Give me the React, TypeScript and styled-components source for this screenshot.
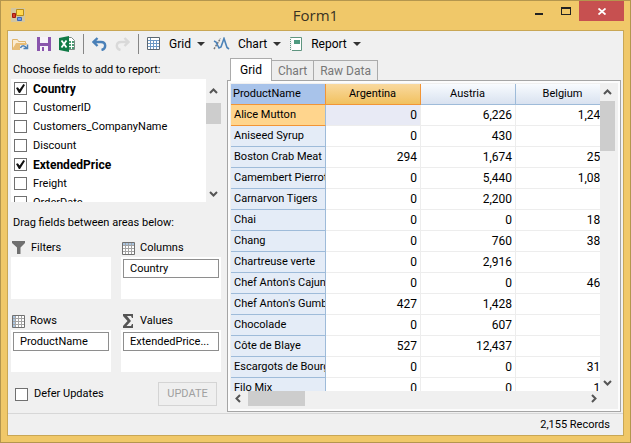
import React from 'react';
import styled, { createGlobalStyle, css } from 'styled-components';

const Global = createGlobalStyle`
  *, *::before, *::after { box-sizing: border-box; }
  html, body { margin: 0; padding: 0; }
  body, button, input, table {
    font-family: Roboto, "Liberation Sans", sans-serif;
    font-size: 12px;
    line-height: 16px;
    color: #000;
  }
  svg { display: block; flex: none; }
`;

const Window = styled.main`
  display: flex;
  flex-direction: column;
  height: 100vh;
  padding: 0 6px 6px;
  border: 1px solid #b4964e;
  background: #f0c869;
`;

const TitleBar = styled.header`
  display: grid;
  grid-template-columns: 1fr auto 1fr;
  height: 29px;
  flex: none;
`;

const TitleIcon = styled.div`
  padding: 7px 4px;
`;

const Title = styled.h1`
  margin: 0;
  font: 400 15px/29px "Open Sans", sans-serif;
  color: #3a3223;
`;

const WindowButtons = styled.div`
  display: flex;
  justify-content: flex-end;
  align-items: flex-start;
`;

const WindowButton = styled.button<{ $close?: boolean }>`
  display: grid;
  place-items: center;
  width: ${p => (p.$close ? 45 : 27)}px;
  height: 20px;
  padding: 0;
  border: 0;
  background: ${p => (p.$close ? '#c75050' : 'transparent')};
`;

const Client = styled.div`
  display: flex;
  flex-direction: column;
  flex: 1;
  min-height: 0;
  border: 1px solid #c9a755;
  background: #f0f0f0;
`;

const Toolbar = styled.nav`
  display: flex;
  align-items: center;
  gap: 8px;
  height: 25px;
  padding-left: 4px;
  flex: none;
`;

const ToolButton = styled.button`
  display: flex;
  align-items: center;
  padding: 0;
  border: 0;
  background: transparent;
`;

const MenuText = styled.span`
  margin: 0 6px 0 8px;
`;

const Separator = styled.span`
  width: 1px;
  height: 20px;
  background: #868686;
`;

const Body = styled.div`
  display: flex;
  gap: 6px;
  flex: 1;
  min-height: 0;
  padding: 0 2px 1px 3px;
`;

const FieldPane = styled.section`
  display: flex;
  flex-direction: column;
  width: 210px;
  flex: none;
  font-size: 11px;
`;

const PaneLabel = styled.h2<{ $spaced?: boolean }>`
  margin: 0;
  padding: ${p => (p.$spaced ? 13 : 6)}px 2px 1px;
  font-size: 11px;
  font-weight: 400;
`;

const FieldBox = styled.div`
  display: flex;
  height: 123px;
  flex: none;
`;

const FieldList = styled.div`
  flex: 1;
  overflow: hidden;
  background: #fff;
`;

const FieldRow = styled.label<{ $bold?: boolean }>`
  display: flex;
  align-items: center;
  gap: 6px;
  height: 19px;
  padding-left: 3px;
  font-size: ${p => (p.$bold ? 12 : 11)}px;
  font-weight: ${p => (p.$bold ? 700 : 400)};
`;

const CheckBox = styled.input.attrs({ type: 'checkbox' })`
  appearance: none;
  display: grid;
  place-items: center;
  width: 13px;
  height: 13px;
  margin: 0;
  flex: none;
  border: 1px solid #707070;
  background: #fff;
  &:checked::before {
    content: '';
    width: 9px;
    height: 9px;
    background: #111;
    clip-path: polygon(0 45%, 20% 35%, 40% 60%, 82% 0, 100% 12%, 45% 100%, 32% 100%);
  }
`;

const Bar = styled.div<{ $horizontal?: boolean }>`
  display: flex;
  flex-direction: ${p => (p.$horizontal ? 'row' : 'column')};
  flex: none;
  ${p => (p.$horizontal ? css`height: 15px; margin-right: 14px;` : css`width: 15px;`)}
  background: #f0f0f0;
`;

const ArrowButton = styled.button<{ $long: number }>`
  display: grid;
  place-items: center;
  width: 15px;
  height: ${p => p.$long}px;
  padding: 0;
  border: 0;
  background: transparent;
`;

const Track = styled.div<{ $horizontal?: boolean }>`
  display: flex;
  flex-direction: ${p => (p.$horizontal ? 'row' : 'column')};
  flex: 1;
  ${p => p.$horizontal && css`padding-left: 2px;`}
`;

const Thumb = styled.div<{ $size: number; $horizontal?: boolean }>`
  ${p => (p.$horizontal ? css`width: ${p.$size}px;` : css`height: ${p.$size}px;`)}
  background: #cdcdcd;
`;

const Areas = styled.div`
  display: grid;
  grid-template-columns: repeat(2, minmax(0, 1fr));
  gap: 13px 10px;
  padding-top: 7px;
`;

const AreaTitle = styled.h3`
  display: flex;
  align-items: center;
  gap: 5px;
  height: 18px;
  margin: 0;
  padding-left: 1px;
  font-size: 11px;
  font-weight: 400;
`;

const DropZone = styled.div`
  height: 42px;
  padding: 2px;
  background: #fff;
`;

const FieldChip = styled.div`
  height: 19px;
  padding: 0 6px;
  border: 1px solid #8e8e8e;
  line-height: 17px;
`;

const Footer = styled.div`
  display: flex;
  justify-content: space-between;
  align-items: center;
  padding: 10px 4px 0 1px;
`;

const UpdateButton = styled.button`
  width: 59px;
  height: 24px;
  padding: 0;
  border: 1px solid #d4d4d4;
  background: #efefef;
  font-size: 11px;
  color: #a0a0a0;
`;

const ViewPane = styled.section`
  display: flex;
  flex-direction: column;
  flex: 1;
  min-width: 0;
  padding-top: 2px;
`;

const Tabs = styled.div`
  display: flex;
  align-items: flex-end;
  height: 22px;
  padding-left: 3px;
  flex: none;
`;

const Tab = styled.button<{ $active?: boolean }>`
  height: ${p => (p.$active ? 23 : 20)}px;
  margin-bottom: ${p => (p.$active ? -1 : 0)}px;
  padding: 0 ${p => (p.$active ? 9 : 6)}px;
  border: 1px solid #ababab;
  border-bottom: 0;
  border-left-width: ${p => (p.$active ? 1 : 0)}px;
  background: ${p => (p.$active ? '#fff' : '#ededed')};
  color: ${p => (p.$active ? '#000' : '#777')};
  z-index: 1;
`;

const TabPanel = styled.div`
  display: flex;
  flex-direction: column;
  flex: 1;
  min-height: 0;
  padding: 3px 5px 5px 3px;
  border: 1px solid #a5a5a5;
  background: #f0f0f0;
  box-shadow: inset 0 0 0 2px #fcfcfc;
`;

const GridArea = styled.div`
  display: flex;
  flex: 1;
  min-height: 0;
`;

const GridClip = styled.div`
  flex: 1;
  min-width: 0;
  overflow: hidden;
  background: #fff;
`;

const DataTable = styled.table`
  width: 380px;
  table-layout: fixed;
  border-collapse: separate;
  border-spacing: 0;
`;

const HeadCell = styled.th<{ $kind: 'corner' | 'active' | 'plain' }>`
  height: 21px;
  padding: 0 3px 0 2px;
  font-size: 11px;
  font-weight: 400;
  text-align: ${p => (p.$kind === 'corner' ? 'left' : 'center')};
  border-right: 1px solid #9ebbd9;
  border-bottom: 1px solid #9ebbd9;
  background: linear-gradient(#f8fbfe, #d9e2f0);
  ${p => p.$kind === 'corner' && css`
    background: #a8c3ea;
    border-right-color: #f29536;
    border-bottom-color: #f29536;
  `}
  ${p => p.$kind === 'active' && css`
    background: linear-gradient(#f9d99f, #f1c15f);
    border-color: #f29536;
  `}
`;

const RowHead = styled.th<{ $active?: boolean }>`
  height: 21px;
  padding: 0 0 0 3px;
  overflow: hidden;
  font-size: 11px;
  font-weight: 400;
  text-align: left;
  white-space: nowrap;
  border-right: 1px solid #9ebbd9;
  border-bottom: 1px solid ${p => (p.$active ? '#f29536' : '#9ebbd9')};
  background: ${p => (p.$active ? '#ffd58d' : '#e4ecf7')};
`;

const Cell = styled.td<{ $active?: boolean }>`
  height: 21px;
  padding: 0 3px;
  text-align: right;
  border-right: 1px solid #ededed;
  border-bottom: 1px solid #ededed;
  background: ${p => (p.$active ? '#e8eaf5' : '#fff')};
`;

const StatusBar = styled.footer`
  height: 22px;
  flex: none;
  padding: 3px 13px 0;
  border-top: 1px solid #d7d7d7;
  font-size: 11px;
  text-align: right;
`;

const chevrons = {
  up: 'M1 6 4.500 2.500 8 6',
  down: 'M1 3 4.500 6.500 8 3',
  left: 'M6 1 2.500 4.500 6 8',
  right: 'M3 1 6.500 4.500 3 8',
};

function Arrow({ dir, long = 17 }: { dir: keyof typeof chevrons; long?: number }) {
  return (
    <ArrowButton $long={long} aria-label={`Scroll ${dir}`}>
      <svg width="9" height="9" fill="none" stroke="#555" strokeWidth="2">
        <path d={chevrons[dir]} />
      </svg>
    </ArrowButton>
  );
}

const FormIcon = () => (
  <svg width="14" height="14">
    <path d="M0 0h14v14H0z" fill="#d3c6a0" />
    <path d="M5.500 1.500h7v6h-7z" fill="#ffd84f" stroke="#b98b16" />
    <path d="M1.500 5.500h3v4h-3z" fill="#d43b28" stroke="#a01810" />
    <path d="M6.500 9.500h4v3h-4z" fill="#6f9bea" stroke="#3c66b5" />
  </svg>
);

const OpenIcon = () => (
  <svg width="17" height="14">
    <path d="M.5 12.500v-10h5l1 2h7V7H5z" fill="#fbecd2" stroke="#dfb56d" />
    <path d="M0 13 4 6h11l-3 7z" fill="#e8bd77" />
    <path d="M8 8h9v6H8z" fill="#f0f0f0" />
    <path d="M8.500 11c1-3 4-3 6 0M15.500 7.500v4h-4" fill="none" stroke="#4d80b5" strokeWidth="1.500" />
  </svg>
);

const SaveIcon = () => (
  <svg width="14" height="14">
    <path d="M0 0h14v14H0z" fill="#8a55ad" />
    <path d="M3 0h8v6H3zM3 9h8v5H3z" fill="#f7f3fa" />
    <path d="M5 10h2v4H5z" fill="#8a55ad" />
  </svg>
);

const ExcelIcon = () => (
  <svg width="16" height="16">
    <path d="M9 1.500h3.500l3 3v9H9z" fill="#fff" stroke="#7d8b84" />
    <path d="M10 5h2v2h-2zM13 5h2v2h-2zM10 8h2v2h-2zM13 8h2v2h-2zM10 11h2v2h-2zM13 11h2v2h-2z" fill="#4b9a73" />
    <path d="M0 2 10 0v16L0 14z" fill="#117a46" />
    <path d="m2.500 4.500 5 7M7.500 4.500l-5 7" stroke="#fff" strokeWidth="1.800" />
  </svg>
);

const UndoIcon = ({ redo = false }: { redo?: boolean }) => (
  <svg width="15" height="14" fill="none" stroke={redo ? '#d9d9d9' : '#4a80b8'} strokeWidth="2.400">
    <g transform={redo ? 'matrix(-1 0 0 1 15 0)' : undefined}>
      <path d="M5.500 1 1.500 5l4 4M2 5h7c5.500 0 5.500 7 .5 8" />
    </g>
  </svg>
);

const GridIcon = () => (
  <svg width="14" height="14">
    <path d="M.5.5h12v12H.5z" fill="#fff" stroke="#5b6670" />
    <path d="M1 3.500h11M1 6.500h11M1 9.500h11M3.500 1v11M6.500 3v9M9.500 3v9" stroke="#6c98c4" />
  </svg>
);

const ChartIcon = () => (
  <svg width="17" height="14" fill="none">
    <path d="M1 12 7.500 1.500" stroke="#777" strokeWidth="1.500" strokeDasharray="2 1" />
    <path d="m1 4 2 1 3 6 2-1 3-8.500 3 9 2 1.500" stroke="#4b82b8" strokeWidth="1.600" />
  </svg>
);

const ReportIcon = () => (
  <svg width="14" height="14">
    <path d="M1.500.5h11v13h-11z" fill="#fff" stroke="#5f9580" />
    <path d="M5 3h6v4H5z" fill="#4f9b80" />
    <path d="M1.500 1v13" stroke="#f0f0f0" strokeWidth="3" strokeDasharray="1 1" />
  </svg>
);

const FilterIcon = () => (
  <svg width="14" height="14"><path d="M0 0h13v2L8.500 6.500V13H5V6.500L0 2z" fill="#707070" /></svg>
);

const AreaGridIcon = ({ rows = false }: { rows?: boolean }) => (
  <svg width="13" height="13">
    <path d="M.5.5h12v12H.5z" fill="#fff" stroke="#707070" />
    <path d={rows ? 'M1 1h3v11H1z' : 'M1 1h11v3H1z'} fill="#a9c4e0" />
    <path d="M1 3.500h11M1 6.500h11M1 9.500h11M3.500 1v11M6.500 1v11M9.500 1v11" stroke="#a4a4a4" />
  </svg>
);

const SumIcon = () => (
  <svg width="13" height="14"><path d="M1 0h10v4h-1L9 2H5l4 5-4.500 5H9l1-2h1v4H1v-2l4.500-5L1 2z" fill="#555" /></svg>
);

const Caret = () => (
  <svg width="8" height="4"><path d="M0 0h8L4 4z" fill="#333" /></svg>
);

const fields: [string, boolean][] = [
  ['Country', true],
  ['CustomerID', false],
  ['Customers_CompanyName', false],
  ['Discount', false],
  ['ExtendedPrice', true],
  ['Freight', false],
  ['OrderDate', false],
];

const menus = [
  { name: 'Grid', icon: <GridIcon /> },
  { name: 'Chart', icon: <ChartIcon /> },
  { name: 'Report', icon: <ReportIcon /> },
];

const areas = [
  { name: 'Filters', icon: <FilterIcon />, field: '' },
  { name: 'Columns', icon: <AreaGridIcon />, field: 'Country' },
  { name: 'Rows', icon: <AreaGridIcon rows />, field: 'ProductName' },
  { name: 'Values', icon: <SumIcon />, field: 'ExtendedPrice...' },
];

const data = [
  ['Alice Mutton', '0', '6,226', '1,248'],
  ['Aniseed Syrup', '0', '430', '0'],
  ['Boston Crab Meat', '294', '1,674', '250'],
  ['Camembert Pierrot', '0', '5,440', '1,088'],
  ['Carnarvon Tigers', '0', '2,200', '0'],
  ['Chai', '0', '0', '180'],
  ['Chang', '0', '760', '380'],
  ['Chartreuse verte', '0', '2,916', '0'],
  ["Chef Anton's Cajun Seasoning", '0', '0', '462'],
  ["Chef Anton's Gumbo Mix", '427', '1,428', '0'],
  ['Chocolade', '0', '607', '0'],
  ['Côte de Blaye', '527', '12,437', '0'],
  ['Escargots de Bourgogne', '0', '0', '318'],
  ['Filo Mix', '0', '0', '14'],
];

export default function App() {
  return (
    <Window>
      <Global />
      <TitleBar>
        <TitleIcon><FormIcon /></TitleIcon>
        <Title>Form1</Title>
        <WindowButtons>
          <WindowButton aria-label="Minimize">
            <svg width="8" height="8"><path d="M0 6h8v2H0z" fill="#222" /></svg>
          </WindowButton>
          <WindowButton aria-label="Maximize">
            <svg width="10" height="8"><path d="M0 0h10v8H0zM1 2v5h8V2z" fill="#222" fillRule="evenodd" /></svg>
          </WindowButton>
          <WindowButton $close aria-label="Close">
            <svg width="8" height="7"><path d="m.5.5 7 6M7.500.5l-7 6" stroke="#fff" strokeWidth="1.800" /></svg>
          </WindowButton>
        </WindowButtons>
      </TitleBar>
      <Client>
        <Toolbar>
          <ToolButton aria-label="Open"><OpenIcon /></ToolButton>
          <ToolButton aria-label="Save"><SaveIcon /></ToolButton>
          <ToolButton aria-label="Export to Excel"><ExcelIcon /></ToolButton>
          <Separator />
          <ToolButton aria-label="Undo"><UndoIcon /></ToolButton>
          <ToolButton aria-label="Redo" disabled><UndoIcon redo /></ToolButton>
          <Separator />
          {menus.map(m => (
            <ToolButton key={m.name} aria-haspopup="menu">
              {m.icon}
              <MenuText>{m.name}</MenuText>
              <Caret />
            </ToolButton>
          ))}
        </Toolbar>
        <Body>
          <FieldPane>
            <PaneLabel>Choose fields to add to report:</PaneLabel>
            <FieldBox>
              <FieldList>
                {fields.map(([name, on]) => (
                  <FieldRow key={name} $bold={on}>
                    <CheckBox defaultChecked={on} />
                    {name}
                  </FieldRow>
                ))}
              </FieldList>
              <Bar>
                <Arrow dir="up" long={24} />
                <Track><Thumb $size={21} /></Track>
                <Arrow dir="down" />
              </Bar>
            </FieldBox>
            <PaneLabel $spaced>Drag fields between areas below:</PaneLabel>
            <Areas>
              {areas.map(a => (
                <div key={a.name}>
                  <AreaTitle>{a.icon}{a.name}</AreaTitle>
                  <DropZone>{a.field && <FieldChip>{a.field}</FieldChip>}</DropZone>
                </div>
              ))}
            </Areas>
            <Footer>
              <FieldRow><CheckBox />Defer Updates</FieldRow>
              <UpdateButton disabled>UPDATE</UpdateButton>
            </Footer>
          </FieldPane>
          <ViewPane>
            <Tabs role="tablist">
              <Tab role="tab" aria-selected $active>Grid</Tab>
              <Tab role="tab">Chart</Tab>
              <Tab role="tab">Raw Data</Tab>
            </Tabs>
            <TabPanel role="tabpanel">
              <GridArea>
                <GridClip>
                  <DataTable>
                    <thead>
                      <tr>
                        <HeadCell $kind="corner">ProductName</HeadCell>
                        <HeadCell $kind="active">Argentina</HeadCell>
                        <HeadCell $kind="plain">Austria</HeadCell>
                        <HeadCell $kind="plain">Belgium</HeadCell>
                      </tr>
                    </thead>
                    <tbody>
                      {data.map(([name, ...values], r) => (
                        <tr key={name}>
                          <RowHead scope="row" $active={r === 0}>{name}</RowHead>
                          {values.map((v, c) => (
                            <Cell key={c} $active={r === 0 && c === 0}>{v}</Cell>
                          ))}
                        </tr>
                      ))}
                    </tbody>
                  </DataTable>
                </GridClip>
                <Bar>
                  <Arrow dir="up" />
                  <Track><Thumb $size={50} /></Track>
                  <Arrow dir="down" />
                </Bar>
              </GridArea>
              <Bar $horizontal>
                <Arrow dir="left" long={15} />
                <Track $horizontal><Thumb $horizontal $size={57} /></Track>
                <Arrow dir="right" long={15} />
              </Bar>
            </TabPanel>
          </ViewPane>
        </Body>
        <StatusBar>2,155 Records</StatusBar>
      </Client>
    </Window>
  );
}
